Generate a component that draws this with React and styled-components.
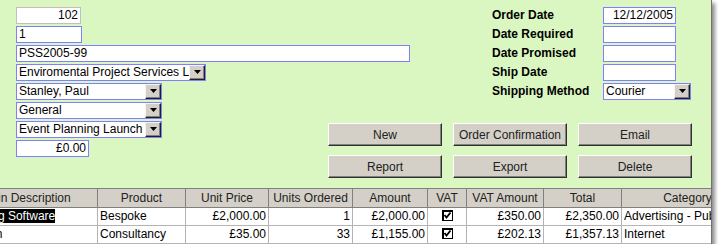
import React from "react";
import styled, { createGlobalStyle } from "styled-components";

const GlobalStyle = createGlobalStyle`
  body {
    margin: 0;
    background: #fff;
    font-family: "Liberation Sans", Arial, sans-serif;
  }
`;

const Frame = styled.div`
  width: 712px;
  height: 244px;
  box-sizing: border-box;
  background: #dbf7c1;
  border-right: 1px solid #707070;
  box-shadow: 3px 3px 4px rgba(0, 0, 0, 0.45);
  display: flex;
  flex-direction: column;
  overflow: hidden;
`;

const Top = styled.div`
  display: grid;
  grid-template-columns: 314px 1fr;
  flex: none;
`;

const FieldStack = styled.div`
  display: flex;
  flex-direction: column;
  align-items: flex-start;
  gap: 2px;
  padding: 7px 0 0 16px;
`;

const TextBox = styled.div`
  width: ${(p) => p.$w}px;
  height: 17px;
  box-sizing: border-box;
  flex: none;
  border: 1px solid ${(p) => (p.$locked ? "#c0c0c0" : "#8080ff")};
  background: #fff;
  font-size: 12px;
  line-height: 15px;
  padding: 0 2px;
  color: #000;
  text-align: ${(p) => p.$align || "left"};
  white-space: nowrap;
  overflow: hidden;
`;

const Combo = styled.div`
  width: ${(p) => p.$w}px;
  height: 17px;
  box-sizing: border-box;
  border: 1px solid #8080ff;
  background: #fff;
  display: flex;
  font-size: 12px;
  line-height: 15px;
`;

const ComboText = styled.div`
  flex: 1;
  padding-left: 2px;
  white-space: nowrap;
  overflow: hidden;
`;

const DropButton = styled.div`
  width: 16px;
  height: 15px;
  box-sizing: border-box;
  flex: none;
  background: #d4d0c8;
  border: 1px solid;
  border-color: #f4f4f4 #202020 #202020 #f4f4f4;
  box-shadow: inset -1px -1px 0 #808080;
  display: flex;
  align-items: center;
  justify-content: center;
  padding-bottom: 1px;
`;

const RightColumn = styled.div`
  display: flex;
  flex-direction: column;
  align-items: flex-end;
  padding: 7px 19px 10px 0;
`;

const DateForm = styled.div`
  display: grid;
  grid-template-columns: 111px 87px;
  row-gap: 2px;
  align-items: center;
  margin-right: 2px;
`;

const Label = styled.div`
  font-size: 12px;
  font-weight: bold;
  line-height: 17px;
  color: #000;
  white-space: nowrap;
`;

const ButtonGrid = styled.div`
  display: grid;
  grid-template-columns: repeat(3, 114px);
  column-gap: 11px;
  row-gap: 9px;
  margin-top: 23px;
`;

const Button = styled.button`
  height: 23px;
  margin: 0;
  padding: 0;
  background: #d4d0c8;
  border: 1px solid;
  border-color: #ffffff #303030 #303030 #ffffff;
  box-shadow: inset -1px -1px 0 #808080;
  font-family: "Liberation Sans", Arial, sans-serif;
  font-size: 12px;
  color: #222;
`;

const GridWrap = styled.div`
  flex: 1;
  overflow: hidden;
  background: #fff;
`;

const Table = styled.table`
  margin-left: -46px;
  border-collapse: collapse;
  table-layout: fixed;
  width: 799px;
  font-size: 12px;
  color: #000;
`;

const Head = styled.th`
  height: 18px;
  padding: 0 2px;
  background: #d4d0c8;
  border: 1px solid #808080;
  font-weight: normal;
  color: #222;
  text-align: center;
  white-space: nowrap;
  overflow: hidden;
  line-height: 16px;
`;

const Cell = styled.td`
  height: 17px;
  padding: 0 2px;
  border: 1px solid #b4b4b4;
  text-align: ${(p) => p.$align || "left"};
  vertical-align: top;
  white-space: nowrap;
  overflow: hidden;
  line-height: 17px;
`;

const Selected = styled.span`
  background: #000;
  color: #fff;
`;

const CheckWrap = styled.div`
  display: flex;
  justify-content: center;
  padding-top: 2px;
  height: 15px;
`;

const Arrow = () => (
  <svg width="7" height="4" viewBox="0 0 7 4">
    <polygon points="0,0 7,0 3.5,4" fill="#000" />
  </svg>
);

const Check = ({ on }) => (
  <svg width="11" height="11" viewBox="0 0 11 11">
    <rect x="0.5" y="0.5" width="10" height="10" fill="#fff" stroke="#000" />
    <rect x="1" y="1" width="9" height="1" fill="#000" />
    <rect x="1" y="1" width="1" height="9" fill="#000" />
    {on && <polyline points="2.5,5 4.5,7.5 8.5,2.5" fill="none" stroke="#000" strokeWidth="1.8" />}
  </svg>
);

const ComboBox = ({ w, children }) => (
  <Combo $w={w}>
    <ComboText>{children}</ComboText>
    <DropButton>
      <Arrow />
    </DropButton>
  </Combo>
);

const columns = [
  ["Main Description", 143],
  ["Product", 88],
  ["Unit Price", 83],
  ["Units Ordered", 84],
  ["Amount", 75],
  ["VAT", 39],
  ["VAT Amount", 77],
  ["Total", 78],
  ["Category", 132],
];

const rows = [
  {
    desc: "Ticketing Software",
    selected: true,
    product: "Bespoke",
    price: "£2,000.00",
    units: "1",
    amount: "£2,000.00",
    vat: true,
    vatAmount: "£350.00",
    total: "£2,350.00",
    category: "Advertising - Public Relations",
  },
  {
    desc: "Creation",
    product: "Consultancy",
    price: "£35.00",
    units: "33",
    amount: "£1,155.00",
    vat: true,
    vatAmount: "£202.13",
    total: "£1,357.13",
    category: "Internet",
  },
  { desc: "", product: "", price: "", units: "", amount: "", vat: false, vatAmount: "", total: "", category: "" },
];

export default function App() {
  return (
    <>
      <GlobalStyle />
      <Frame>
        <Top>
          <FieldStack>
            <TextBox $w={65} $align="right" $locked>102</TextBox>
            <TextBox $w={66}>1</TextBox>
            <TextBox $w={394}>PSS2005-99</TextBox>
            <ComboBox w={190}>Enviromental Project Services Ltd</ComboBox>
            <ComboBox w={146}>Stanley, Paul</ComboBox>
            <ComboBox w={146}>General</ComboBox>
            <ComboBox w={146}>Event Planning Launch</ComboBox>
            <TextBox $w={73} $align="right">£0.00</TextBox>
          </FieldStack>
          <RightColumn>
            <DateForm>
              <Label>Order Date</Label>
              <TextBox $w={73} $align="right">12/12/2005</TextBox>
              <Label>Date Required</Label>
              <TextBox $w={73} />
              <Label>Date Promised</Label>
              <TextBox $w={73} />
              <Label>Ship Date</Label>
              <TextBox $w={73} />
              <Label>Shipping Method</Label>
              <ComboBox w={88}>Courier</ComboBox>
            </DateForm>
            <ButtonGrid>
              <Button>New</Button>
              <Button>Order Confirmation</Button>
              <Button>Email</Button>
              <Button>Report</Button>
              <Button>Export</Button>
              <Button>Delete</Button>
            </ButtonGrid>
          </RightColumn>
        </Top>
        <GridWrap>
          <Table>
            <colgroup>
              {columns.map(([name, w]) => (
                <col key={name} style={{ width: w }} />
              ))}
            </colgroup>
            <thead>
              <tr>
                {columns.map(([name]) => (
                  <Head key={name}>{name}</Head>
                ))}
              </tr>
            </thead>
            <tbody>
              {rows.map((r, i) => (
                <tr key={i}>
                  <Cell>{r.selected ? <Selected>{r.desc}</Selected> : r.desc}</Cell>
                  <Cell>{r.product}</Cell>
                  <Cell $align="right">{r.price}</Cell>
                  <Cell $align="right">{r.units}</Cell>
                  <Cell $align="right">{r.amount}</Cell>
                  <Cell>
                    <CheckWrap>
                      <Check on={r.vat} />
                    </CheckWrap>
                  </Cell>
                  <Cell $align="right">{r.vatAmount}</Cell>
                  <Cell $align="right">{r.total}</Cell>
                  <Cell>{r.category}</Cell>
                </tr>
              ))}
            </tbody>
          </Table>
        </GridWrap>
      </Frame>
    </>
  );
}
